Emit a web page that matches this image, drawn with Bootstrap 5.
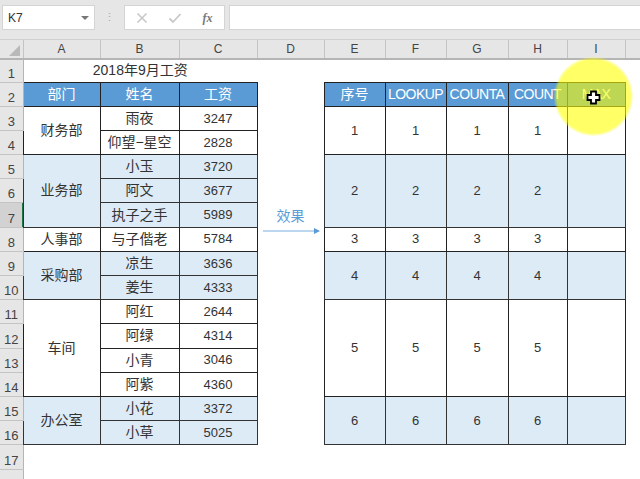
<!DOCTYPE html>
<html lang="zh-CN">
<head>
  <meta charset="UTF-8">
  <meta name="viewport" content="width=device-width, initial-scale=1">
  <title>2018年9月工资</title>
  <link href="https://cdn.jsdelivr.net/npm/bootstrap@5.3.0/dist/css/bootstrap.min.css" rel="stylesheet">
  <style>
    body {
      width: 640px;
      height: 479px;
      overflow: hidden;
      background: #fff;
      font-family: "Liberation Sans", "Noto Sans CJK SC", sans-serif;
      color: #333;
    }
    .app-frame { position: relative; width: 640px; height: 479px; overflow: hidden; }

    /* formula bar */
    .fbar { height: 40px; background: #e6e6e6; padding: 5px 0 10px 2px; border-bottom: 1px solid #d0d0d0; }
    .fbox { background: #fff; border: 1px solid #d4d4d4; height: 25px; }
    .name-box { width: 93px; font-size: 12px; padding-left: 5px; }
    .name-caret { width: 0; height: 0; border-left: 4px solid transparent; border-right: 4px solid transparent; border-top: 4px solid #777; margin-right: 5px; }
    .fdots { width: 29px; color: #aaa; font-size: 11px; line-height: 1; }
    .fbtns { width: 101px; margin-right: 4px; }
    .fbtns span { width: 34px; text-align: center; }
    .fx-label { font-family: "Liberation Serif", serif; font-style: italic; font-weight: 700; font-size: 12px; color: #777; }
    .formula-input { flex: 1; border-right: 0; }

    /* sheet grid */
    .sheet { table-layout: fixed; border-collapse: collapse; width: 640px; font-size: 14px; }
    .sheet td, .sheet th { padding: 0; text-align: center; vertical-align: middle; font-weight: 400; overflow: hidden; white-space: nowrap; }
    .sheet tr { height: 24.2px; }
    .sheet tr.col-heads { height: 17px; }
    .sheet tr.title-row { height: 23px; }
    .col-heads th { background: #e6e6e6; border-bottom: 2px solid #b5b5b5; border-right: 1px solid #c4c4c4; color: #444; font-size: 12px; }
    .col-heads th.corner { position: relative; }
    .corner-mark { position: absolute; right: 3px; bottom: 2px; width: 0; height: 0; border-left: 11px solid transparent; border-bottom: 11px solid #b9b9b9; }
    .sheet td.rh { background: #e6e6e6; border-right: 1px solid #b5b5b5; border-bottom: 1px solid #c4c4c4; color: #444; font-size: 13px; vertical-align: bottom; line-height: 16px; }
    .sheet td.rh-active { background: #d2d2d2; box-shadow: inset -1px 0 0 #217346; }
    .sheet td.hd { background: #5b9bd5; color: #fff; border: 1px solid #222; }
    .sheet td.cl { border: 1px solid #222; color: #333; }
    .sheet td.sh { background: #ddebf7; border: 1px solid #333; color: #333; }
    .sheet td.num { font-size: 13px; }
    .sheet td.effect-cell { vertical-align: top; }
    .effect-label { color: #5b9bd5; font-size: 14px; line-height: 18px; margin-top: 4px; }
    .effect-arrow { display: block; margin: 2px 0 0 5px; }
    .sheet td.hd.tight { letter-spacing: -0.55px; }

    /* mouse highlight */
    .spot { position: absolute; left: 554px; top: 57px; width: 79px; height: 79px; border-radius: 50%; background: radial-gradient(closest-side, rgba(255,255,0,.6) 92%, rgba(255,255,0,.15) 100%); }
    .pointer { position: absolute; left: 586px; top: 90px; }
  </style>
</head>
<body>
  <div class="app-frame">
    <div class="fbar d-flex align-items-stretch">
      <div class="fbox name-box d-flex align-items-center justify-content-between"><span>K7</span><span class="name-caret"></span></div>
      <div class="fdots d-flex align-items-center justify-content-center">⋮</div>
      <div class="fbox fbtns d-flex align-items-center">
        <span>
          <svg width="12" height="12" viewBox="0 0 12 12"><path d="M1.5 1.5 10.5 10.5M10.5 1.5 1.5 10.5" stroke="#c8c8c8" stroke-width="1.6" fill="none"/></svg>
        </span>
        <span>
          <svg width="14" height="12" viewBox="0 0 14 12"><path d="M1.5 6.5 5 10 12.5 2" stroke="#c8c8c8" stroke-width="1.8" fill="none"/></svg>
        </span>
        <span class="fx-label">fx</span>
      </div>
      <div class="fbox formula-input"></div>
    </div>

    <table class="sheet">
      <colgroup>
        <col style="width:23px"><col style="width:77px"><col style="width:79px"><col style="width:78px"><col style="width:67px">
        <col style="width:61px"><col style="width:61px"><col style="width:62px"><col style="width:59px"><col style="width:58px"><col style="width:15px">
      </colgroup>
      <tbody>
        <tr class="col-heads">
          <th class="corner"><span class="corner-mark"></span></th>
          <th>A</th><th>B</th><th>C</th><th>D</th><th>E</th><th>F</th><th>G</th><th>H</th><th>I</th><th></th>
        </tr>
        <tr class="title-row"><td class="rh">1</td><td colspan="3">2018年9月工资</td><td colspan="7"></td></tr>
        <tr><td class="rh">2</td><td class="hd">部门</td><td class="hd">姓名</td><td class="hd">工资</td><td></td><td class="hd">序号</td><td class="hd tight">LOOKUP</td><td class="hd tight">COUNTA</td><td class="hd tight">COUNT</td><td class="hd tight">MAX</td><td></td></tr>
        <tr><td class="rh">3</td><td rowspan="2" class="cl">财务部</td><td class="cl">雨夜</td><td class="cl num">3247</td><td></td><td rowspan="2" class="cl num">1</td><td rowspan="2" class="cl num">1</td><td rowspan="2" class="cl num">1</td><td rowspan="2" class="cl num">1</td><td rowspan="2" class="cl"></td><td></td></tr>
        <tr><td class="rh">4</td><td class="cl">仰望−星空</td><td class="cl num">2828</td><td></td><td></td></tr>
        <tr><td class="rh">5</td><td rowspan="3" class="sh">业务部</td><td class="sh">小玉</td><td class="sh num">3720</td><td></td><td rowspan="3" class="sh num">2</td><td rowspan="3" class="sh num">2</td><td rowspan="3" class="sh num">2</td><td rowspan="3" class="sh num">2</td><td rowspan="3" class="sh"></td><td></td></tr>
        <tr><td class="rh">6</td><td class="sh">阿文</td><td class="sh num">3677</td><td></td><td></td></tr>
        <tr><td class="rh rh-active">7</td><td class="sh">执子之手</td><td class="sh num">5989</td>
          <td rowspan="2" class="effect-cell">
            <div class="effect-label">效果</div>
            <svg class="effect-arrow" width="58" height="8" viewBox="0 0 58 8"><path d="M0 4H51" stroke="#7aaee0" stroke-width="1"/><path d="M51 1 57 4 51 7Z" fill="#5b9bd5"/></svg>
          </td><td></td></tr>
        <tr><td class="rh">8</td><td class="cl">人事部</td><td class="cl">与子偕老</td><td class="cl num">5784</td><td class="cl num">3</td><td class="cl num">3</td><td class="cl num">3</td><td class="cl num">3</td><td class="cl"></td><td></td></tr>
        <tr><td class="rh">9</td><td rowspan="2" class="sh">采购部</td><td class="sh">凉生</td><td class="sh num">3636</td><td></td><td rowspan="2" class="sh num">4</td><td rowspan="2" class="sh num">4</td><td rowspan="2" class="sh num">4</td><td rowspan="2" class="sh num">4</td><td rowspan="2" class="sh"></td><td></td></tr>
        <tr><td class="rh">10</td><td class="sh">姜生</td><td class="sh num">4333</td><td></td><td></td></tr>
        <tr><td class="rh">11</td><td rowspan="4" class="cl">车间</td><td class="cl">阿红</td><td class="cl num">2644</td><td></td><td rowspan="4" class="cl num">5</td><td rowspan="4" class="cl num">5</td><td rowspan="4" class="cl num">5</td><td rowspan="4" class="cl num">5</td><td rowspan="4" class="cl"></td><td></td></tr>
        <tr><td class="rh">12</td><td class="cl">阿绿</td><td class="cl num">4314</td><td></td><td></td></tr>
        <tr><td class="rh">13</td><td class="cl">小青</td><td class="cl num">3046</td><td></td><td></td></tr>
        <tr><td class="rh">14</td><td class="cl">阿紫</td><td class="cl num">4360</td><td></td><td></td></tr>
        <tr><td class="rh">15</td><td rowspan="2" class="sh">办公室</td><td class="sh">小花</td><td class="sh num">3372</td><td></td><td rowspan="2" class="sh num">6</td><td rowspan="2" class="sh num">6</td><td rowspan="2" class="sh num">6</td><td rowspan="2" class="sh num">6</td><td rowspan="2" class="sh"></td><td></td></tr>
        <tr><td class="rh">16</td><td class="sh">小草</td><td class="sh num">5025</td><td></td><td></td></tr>
        <tr><td class="rh">17</td><td colspan="10"></td></tr>
        <tr><td class="rh"></td><td colspan="10"></td></tr>
      </tbody>
    </table>

    <div class="spot"></div>
    <svg class="pointer" width="15" height="15" viewBox="0 0 15 15"><path d="M5 1.5H10V5H13.5V10H10V13.5H5V10H1.5V5H5Z" fill="#fff" stroke="#000" stroke-width="1.8"/></svg>
  </div>
  <script src="https://cdn.jsdelivr.net/npm/bootstrap@5.3.0/dist/js/bootstrap.bundle.min.js"></script>
</body>
</html>
